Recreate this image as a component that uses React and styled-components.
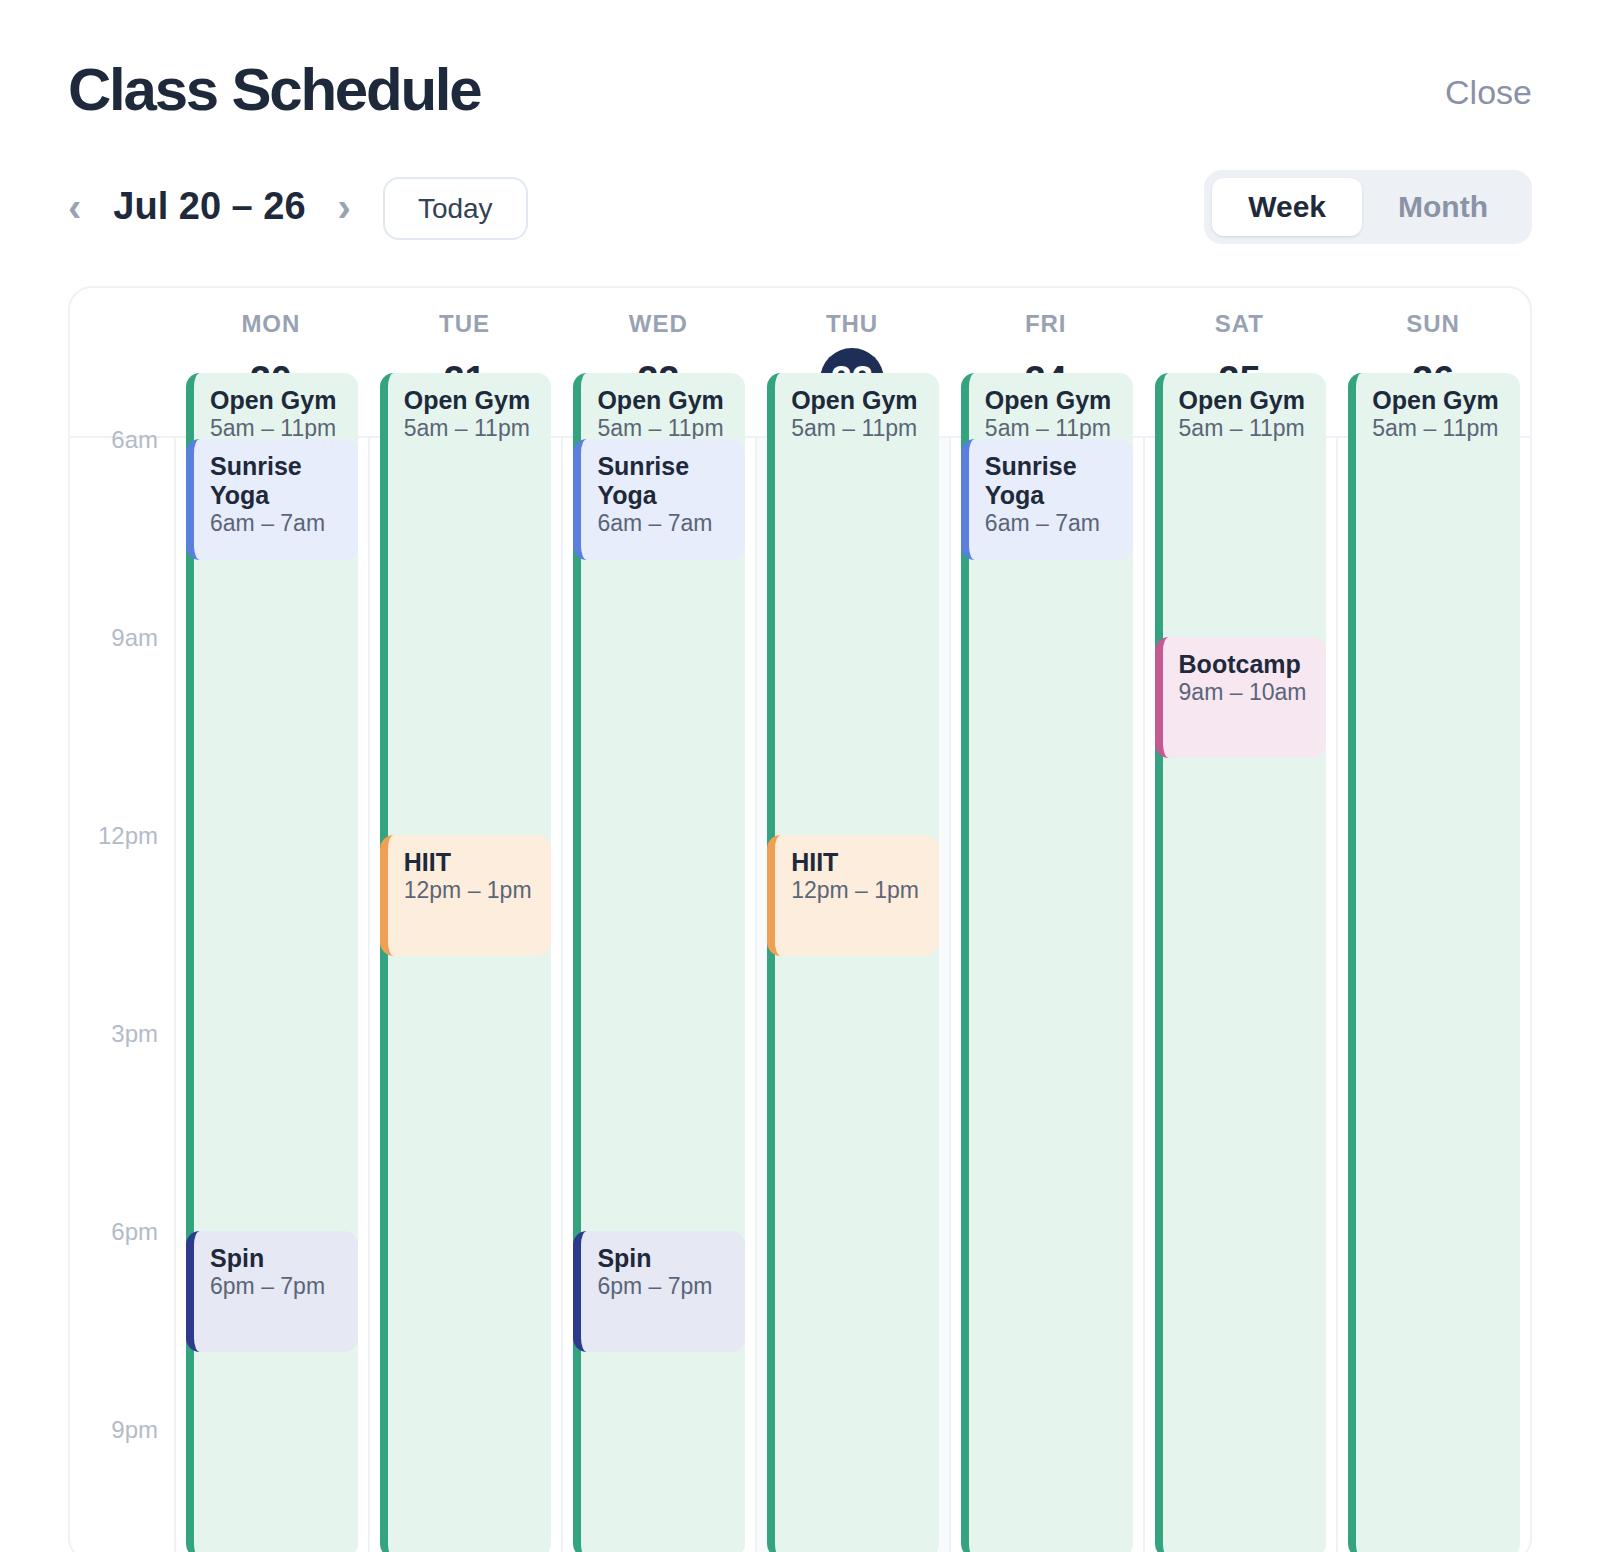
import React from "react";
import styled, { createGlobalStyle, css } from "styled-components";

const HOUR = 66;
const GRID_START = 6;
const GRID_HOURS = 17;

const tones = {
  green: { bar: "#34a37f", bg: "#e5f5ed" },
  blue: { bar: "#5b7fdc", bg: "#e7edfa" },
  orange: { bar: "#f0a055", bg: "#fdeddc" },
  pink: { bar: "#c45a92", bg: "#f6e7f0" },
  indigo: { bar: "#2e3a8c", bg: "#e6e8f4" },
};

const gym = { title: "Open Gym", time: "5am – 11pm", start: 5, end: 23, tone: "green" };
const yoga = { title: "Sunrise Yoga", time: "6am – 7am", start: 6, end: 7, tone: "blue" };
const hiit = { title: "HIIT", time: "12pm – 1pm", start: 12, end: 13, tone: "orange" };
const bootcamp = { title: "Bootcamp", time: "9am – 10am", start: 9, end: 10, tone: "pink" };
const spin = { title: "Spin", time: "6pm – 7pm", start: 18, end: 19, tone: "indigo" };

const days = [
  { name: "MON", num: 20, events: [gym, yoga, spin] },
  { name: "TUE", num: 21, events: [gym, hiit] },
  { name: "WED", num: 22, events: [gym, yoga, spin] },
  { name: "THU", num: 23, today: true, events: [gym, hiit] },
  { name: "FRI", num: 24, events: [gym, yoga] },
  { name: "SAT", num: 25, events: [gym, bootcamp] },
  { name: "SUN", num: 26, events: [gym] },
];

const labels = ["6am", "9am", "12pm", "3pm", "6pm", "9pm"];

const GlobalStyle = createGlobalStyle`
  *, *::before, *::after { box-sizing: border-box; }
  html, body {
    margin: 0;
    padding: 0;
    background: #ffffff;
    overflow: hidden;
  }
  body {
    font-family: "Liberation Sans", Arial, sans-serif;
    color: #1e293b;
  }
  button { font-family: inherit; }
`;

export default function App() {
  return (
    <>
      <GlobalStyle />
      <Page>
        <TopBar>
          <Title>Class Schedule</Title>
          <CloseButton type="button">Close</CloseButton>
        </TopBar>

        <Toolbar>
          <NavGroup>
            <Chevron type="button" aria-label="Previous week">‹</Chevron>
            <DateRange>Jul 20 – 26</DateRange>
            <Chevron type="button" aria-label="Next week">›</Chevron>
            <TodayButton type="button">Today</TodayButton>
          </NavGroup>
          <Segmented>
            <SegButton type="button" $active>Week</SegButton>
            <SegButton type="button">Month</SegButton>
          </Segmented>
        </Toolbar>

        <Calendar>
          <HeaderRow>
            <Corner />
            {days.map((d) => (
              <DayHead key={d.name}>
                <DayName>{d.name}</DayName>
                <DayNum $today={d.today}>{d.num}</DayNum>
              </DayHead>
            ))}
          </HeaderRow>

          <Body>
            <Gutter>
              {labels.map((l) => (
                <Slot key={l}>
                  <TimeLabel>{l}</TimeLabel>
                </Slot>
              ))}
            </Gutter>
            {days.map((d) => (
              <DayColumn key={d.name} $today={d.today}>
                {d.events.map((ev, i) => {
                  const top = (ev.start - GRID_START) * HOUR + 1;
                  const height = Math.max((ev.end - ev.start) * HOUR - 3, 121);
                  return (
                    <EventCard key={i} $tone={ev.tone} style={{ top, height }}>
                      <EventTitle>{ev.title}</EventTitle>
                      <EventTime>{ev.time}</EventTime>
                    </EventCard>
                  );
                })}
              </DayColumn>
            ))}
          </Body>
        </Calendar>
      </Page>
    </>
  );
}

const Page = styled.div`
  height: 100vh;
  overflow: hidden;
  padding: 54px 68px 0;
`;

const TopBar = styled.header`
  display: flex;
  align-items: center;
  justify-content: space-between;
  height: 72px;
`;

const Title = styled.h1`
  margin: 0;
  font-size: 60px;
  line-height: 72px;
  font-weight: 700;
  letter-spacing: -0.037em;
  color: #1e293b;
`;

const CloseButton = styled.button`
  margin-top: 4px;
  padding: 0;
  border: none;
  background: none;
  font-size: 34px;
  line-height: 1.2;
  color: #8a93a5;
  cursor: pointer;
`;

const Toolbar = styled.div`
  display: flex;
  align-items: center;
  justify-content: space-between;
  margin-top: 44px;
  height: 74px;
`;

const NavGroup = styled.div`
  display: flex;
  align-items: center;
  gap: 32px;
`;

const Chevron = styled.button`
  padding: 0;
  border: none;
  background: none;
  font-size: 40px;
  font-weight: 700;
  line-height: 1;
  color: #9aa3b5;
  cursor: pointer;
`;

const DateRange = styled.div`
  font-size: 38px;
  font-weight: 700;
  line-height: 1.2;
  color: #1e293b;
`;

const TodayButton = styled.button`
  height: 63px;
  margin-top: 3px;
  padding: 0 33px;
  border: 2px solid #e2e8f0;
  border-radius: 16px;
  background: #ffffff;
  font-size: 28px;
  color: #334155;
  cursor: pointer;
`;

const Segmented = styled.div`
  display: flex;
  padding: 8px;
  border-radius: 18px;
  background: #edf1f6;
`;

const SegButton = styled.button`
  height: 58px;
  padding: 0 36px;
  border: none;
  border-radius: 12px;
  background: transparent;
  font-size: 30px;
  font-weight: 700;
  color: #8a93a6;
  cursor: pointer;

  ${(p) =>
    p.$active &&
    css`
      background: #ffffff;
      color: #1e293b;
      box-shadow: 0 1px 3px rgba(15, 23, 42, 0.12);
    `}
`;

const Calendar = styled.section`
  margin-top: 42px;
  border: 2px solid #eef1f5;
  border-radius: 24px;
`;

const columns = css`
  display: grid;
  grid-template-columns: 104px repeat(7, 1fr);
`;

const HeaderRow = styled.div`
  ${columns}
  border-bottom: 2px solid #eef1f5;
`;

const Corner = styled.div``;

const DayHead = styled.div`
  display: flex;
  flex-direction: column;
  align-items: center;
  padding: 22px 0 24px;
`;

const DayName = styled.div`
  font-size: 24px;
  line-height: 28px;
  font-weight: 700;
  letter-spacing: 0.04em;
  color: #98a2b3;
`;

const DayNum = styled.div`
  margin-top: 10px;
  width: 64px;
  height: 64px;
  border-radius: 50%;
  display: flex;
  align-items: center;
  justify-content: center;
  font-size: 38px;
  line-height: 64px;
  font-weight: 700;
  color: ${(p) => (p.$today ? "#ffffff" : "#1e293b")};
  background: ${(p) => (p.$today ? "#1d2f57" : "transparent")};
`;

const Body = styled.div`
  ${columns}
  grid-template-rows: ${GRID_HOURS * HOUR}px;
`;

const Gutter = styled.div`
  display: flex;
  flex-direction: column;
`;

const Slot = styled.div`
  flex: 0 0 ${HOUR * 3}px;
  padding-right: 16px;
  text-align: right;
`;

const TimeLabel = styled.div`
  transform: translateY(-12px);
  font-size: 24px;
  line-height: 28px;
  color: #b3bbca;
`;

const DayColumn = styled.div`
  position: relative;
  border-left: 2px solid #eef1f5;
  background: ${(p) => (p.$today ? "#f8fafc" : "transparent")};
`;

const EventCard = styled.div`
  position: absolute;
  left: 10px;
  right: 10px;
  z-index: 1;
  padding: 13px 12px 0 16px;
  border-left: 8px solid ${(p) => tones[p.$tone].bar};
  border-radius: 14px;
  background: ${(p) => tones[p.$tone].bg};
  overflow: hidden;
`;

const EventTitle = styled.div`
  font-size: 25px;
  line-height: 1.15;
  font-weight: 700;
  color: #1e293b;
`;

const EventTime = styled.div`
  font-size: 23px;
  line-height: 1.15;
  color: #5b6578;
`;
